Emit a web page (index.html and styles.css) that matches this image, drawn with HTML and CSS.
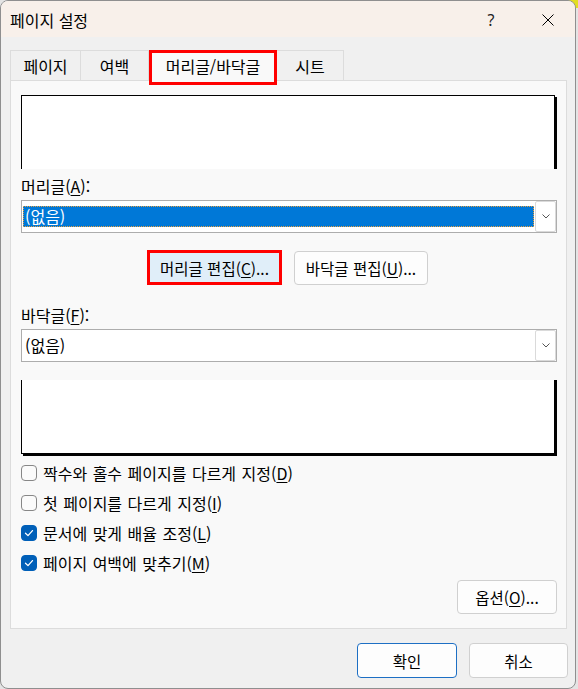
FILE: index.html
```html
<!DOCTYPE html>
<html lang="ko">
<head>
<meta charset="utf-8">
<title>페이지 설정</title>
<link rel="stylesheet" href="styles.css">
</head>
<body>
<div class="window">
  <div class="titlebar">
    <span class="title">페이지 설정</span>
    <span class="help">?</span>
    <span class="close">
      <svg width="12" height="12" viewBox="0 0 12 12"><path d="M0.5 0.5 L11.5 11.5 M11.5 0.5 L0.5 11.5" stroke="#000" stroke-width="1" fill="none"/></svg>
    </span>
  </div>
  <div class="tabs">
    <div class="tab tab-1">페이지</div>
    <div class="tab tab-2">여백</div>
    <div class="tab tab-active">머리글/바닥글</div>
    <div class="tab tab-4">시트</div>
  </div>
  <div class="panel">
    <div class="preview preview-top"><div class="page"></div></div>
    <div class="label label-first">머리글(<u>A</u>):</div>
    <div class="combo">
      <div class="combo-value"><span class="sel">(없음)</span></div>
      <div class="combo-btn"><svg width="8" height="5" viewBox="0 0 8 5"><path d="M0.5 0.5 L4 4 L7.5 0.5" stroke="#555" stroke-width="1" fill="none"/></svg></div>
    </div>
    <div class="btn-row">
      <button class="btn btn-hot">머리글 편집(<u>C</u>)...</button>
      <button class="btn btn-footer-edit">바닥글 편집(<u>U</u>)...</button>
    </div>
    <div class="label label-second">바닥글(<u>F</u>):</div>
    <div class="combo">
      <div class="combo-value"><span class="plain">(없음)</span></div>
      <div class="combo-btn"><svg width="8" height="5" viewBox="0 0 8 5"><path d="M0.5 0.5 L4 4 L7.5 0.5" stroke="#555" stroke-width="1" fill="none"/></svg></div>
    </div>
    <div class="preview preview-bottom"><div class="page"></div></div>
    <div class="checks">
      <div class="check"><span class="box"></span>짝수와 홀수 페이지를 다르게 지정(<u>D</u>)</div>
      <div class="check"><span class="box"></span>첫 페이지를 다르게 지정(<u>I</u>)</div>
      <div class="check"><span class="box checked"><svg width="14" height="14" viewBox="0 0 14 14"><path d="M3.5 7.2 L6 9.6 L10.5 4.6" stroke="#fff" stroke-width="1.3" fill="none" stroke-linecap="round" stroke-linejoin="round"/></svg></span>문서에 맞게 배율 조정(<u>L</u>)</div>
      <div class="check"><span class="box checked"><svg width="14" height="14" viewBox="0 0 14 14"><path d="M3.5 7.2 L6 9.6 L10.5 4.6" stroke="#fff" stroke-width="1.3" fill="none" stroke-linecap="round" stroke-linejoin="round"/></svg></span>페이지 여백에 맞추기(<u>M</u>)</div>
    </div>
    <div class="options-row">
      <button class="btn btn-options">옵션(<u>O</u>)...</button>
    </div>
  </div>
  <div class="footer">
    <button class="btn btn-ok">확인</button>
    <button class="btn btn-cancel">취소</button>
  </div>
</div>
</body>
</html>
```
FILE: styles.css
```css
html, body {
  margin: 0;
  padding: 0;
}
body {
  background: linear-gradient(#e2de22, #e2de22) no-repeat right top / 130px 8px, #e4e4e4;
  font-family: "Noto Sans CJK KR", "Noto Sans", sans-serif;
  font-size: 16px;
  line-height: 20px;
  color: #000;
}
u {
  text-decoration: underline;
  text-underline-offset: 2px;
}
.window {
  width: 576px;
  height: 689px;
  box-sizing: border-box;
  border: 1px solid #8f8f8f;
  border-radius: 8px;
  background: #f0f0f0;
  overflow: hidden;
  display: flex;
  flex-direction: column;
}
.titlebar {
  height: 36px;
  flex: none;
  background: #f8f0ea;
  display: flex;
  align-items: center;
  padding: 1px 4px 0 9px;
  box-sizing: border-box;
}
.title {
  font-size: 16px;
}
.help {
  margin-left: auto;
  width: 24px;
  text-align: center;
  font-family: "Noto Sans", sans-serif;
  font-size: 16px;
  color: #222;
}
.close {
  width: 46px;
  margin-left: 22px;
  display: flex;
  justify-content: center;
  align-items: center;
}
.tabs {
  display: flex;
  align-items: flex-start;
  margin: 13px 0 0 9px;
  height: 30px;
  flex: none;
}
.tab {
  height: 30px;
  box-sizing: border-box;
  border: 1px solid #dcdcdc;
  border-bottom: none;
  background: #f0f0f0;
  display: flex;
  align-items: center;
  justify-content: center;
}
.tab-1 { width: 71px; }
.tab-2 { width: 69px; margin-left: -1px; }
.tab-4 { width: 68px; margin-left: -1px; }
.tab-active {
  width: 128px;
  height: 35px;
  margin-bottom: -5px;
  border: 3px solid #ff0000;
  background: #f9f9f9;
  padding-bottom: 4px;
  position: relative;
  z-index: 1;
}
.panel {
  margin-left: 9px;
  width: 557px;
  box-sizing: border-box;
  border: 1px solid #dcdcdc;
  background: #f9f9f9;
  padding: 14px 9px 14px 10px;
  flex: none;
}
.preview {
  overflow: hidden;
  width: 537px;
}
.preview-top {
  height: 74px;
}
.preview-bottom {
  height: 76px;
  margin-top: 18px;
}
.page {
  width: 534px;
  height: 100px;
  box-sizing: border-box;
  border: 1px solid #000;
  background: #fff;
  box-shadow: 2px 2px 0 #000;
}
.preview-bottom .page {
  margin-top: -26px;
}
.label {
  height: 20px;
}
.label-first { margin-top: 7px; }
.label-second { margin-top: 20px; }
.combo {
  display: flex;
  height: 33px;
  box-sizing: border-box;
  border: 1px solid #adadad;
  background: #fff;
  margin-top: 4px;
}
.combo-value {
  flex: 1;
  padding: 5px 1px 5px 1px;
  display: flex;
}
.sel {
  flex: 1;
  height: 21px;
  box-sizing: border-box;
  background: #0078d7;
  color: #fff;
  outline: 1px dotted #e8a040;
  outline-offset: -1px;
  padding-left: 2px;
  line-height: 21px;
}
.plain {
  padding-left: 2px;
  line-height: 21px;
}
.combo-btn {
  width: 21px;
  height: 31px;
  box-sizing: border-box;
  border: 1px solid #dadada;
  border-radius: 2px;
  background: #fff;
  display: flex;
  align-items: center;
  justify-content: center;
}
.btn {
  font-family: inherit;
  font-size: 15.5px;
  line-height: 20px;
  color: #000;
  background: #fdfdfd;
  border: 1px solid #d0d0d0;
  border-radius: 4px;
  padding: 0;
  box-sizing: border-box;
  display: flex;
  align-items: center;
  justify-content: center;
}
.btn-row {
  display: flex;
  align-items: flex-start;
  margin-top: 17px;
  padding-left: 126px;
}
.btn-hot {
  width: 135px;
  height: 35px;
  border: 3px solid #ff0000;
  border-radius: 0;
  background: #e0eef9;
}
.btn-footer-edit {
  width: 134px;
  height: 34px;
  margin-top: 1px;
  margin-left: 12px;
}
.checks {
  margin-top: 2px;
}
.check {
  display: flex;
  align-items: center;
  height: 30px;
  word-spacing: 1px;
}
.box {
  width: 16px;
  height: 16px;
  flex: none;
  box-sizing: border-box;
  border: 1px solid #878787;
  border-radius: 4px;
  background: #fbfbfb;
  margin-right: 6px;
  display: flex;
  align-items: center;
  justify-content: center;
}
.box.checked {
  background: #005fb8;
  border-color: #005fb8;
}
.options-row {
  display: flex;
  justify-content: flex-end;
  margin-top: 2px;
}
.btn-options {
  width: 100px;
  height: 34px;
}
.footer {
  display: flex;
  justify-content: flex-end;
  gap: 12px;
  margin-top: 14px;
  padding-right: 7px;
}
.btn-ok {
  width: 100px;
  height: 35px;
  border-color: #1d6fc4;
}
.btn-cancel {
  width: 99px;
  height: 35px;
}
```
